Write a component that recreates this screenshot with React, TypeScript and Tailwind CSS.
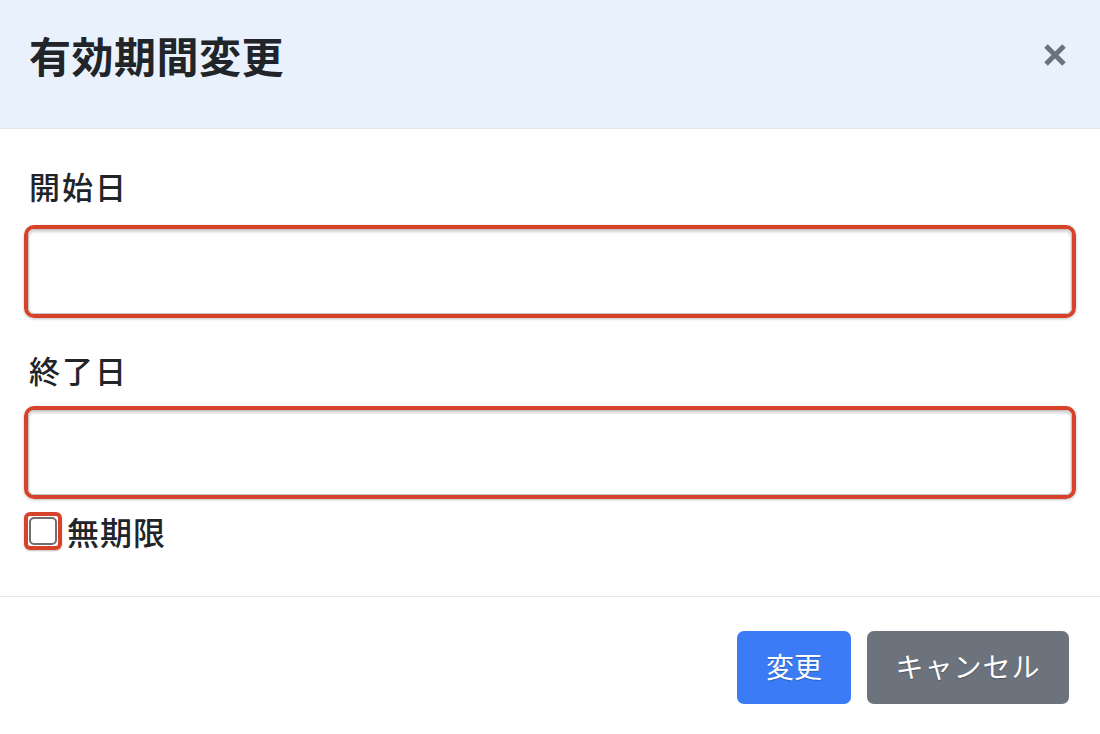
import React from "react";

const font = { fontFamily: '"Noto Sans CJK JP", "Noto Sans", sans-serif' };

function Field() {
  return (
    <div className="rounded-[10px] border-[4px] border-[#d6432a] shadow-[0_1px_3px_rgba(0,0,0,0.25)]">
      <div className="h-[85px] rounded-[6px] border border-[#c4c4c4] bg-white shadow-[inset_0_2px_3px_rgba(0,0,0,0.18)]" />
    </div>
  );
}

export default function App() {
  return (
    <div className="w-[1100px] h-[734px] bg-white text-[#212529]" style={font}>
      <div className="h-[129px] bg-[#e9f1fd] border-b border-[#e3e6ea] flex items-center justify-between pl-[29px] pr-[32px] pb-[18px]">
        <h1 className="text-[42px] font-bold leading-none tracking-[0.5px]">有効期間変更</h1>
        <svg width="26" height="26" viewBox="0 0 26 26" className="text-[#6c737c]">
          <path d="M4 4 L22 22 M22 4 L4 22" stroke="currentColor" strokeWidth="5" strokeLinecap="butt" />
        </svg>
      </div>
      <div className="px-[24px] pt-[35px] pb-[46px] border-b border-[#e3e6ea]">
        <div className="pl-[5px] text-[31px] font-medium leading-[44px] tracking-[2px]">開始日</div>
        <div className="mt-[17px]"><Field /></div>
        <div className="mt-[30px] pl-[5px] text-[31px] font-medium leading-[44px] tracking-[2px]">終了日</div>
        <div className="mt-[14px]"><Field /></div>
        <div className="mt-[13px] flex items-center gap-[5px]">
          <div className="w-[38px] h-[38px] rounded-[6px] border-[4px] border-[#d6432a] flex items-center justify-center shadow-[0_1px_2px_rgba(0,0,0,0.25)]">
            <div className="w-[28px] h-[28px] rounded-[5px] border-[2px] border-[#6f6f6f] bg-white" />
          </div>
          <span className="text-[32px] font-medium leading-[38px] tracking-[1px]">無期限</span>
        </div>
      </div>
      <div className="flex justify-end gap-[16px] pr-[31px] pt-[34px]">
        <button className="w-[114px] h-[73px] pb-[4px] rounded-[7px] bg-[#3b7cf6] text-white text-[28px] [text-shadow:0_1px_1px_rgba(0,0,0,0.25)]">変更</button>
        <button className="w-[202px] h-[73px] pb-[4px] rounded-[7px] bg-[#6c737d] text-white text-[28px] tracking-[1px] [text-shadow:0_1px_1px_rgba(0,0,0,0.3)]">キャンセル</button>
      </div>
    </div>
  );
}
